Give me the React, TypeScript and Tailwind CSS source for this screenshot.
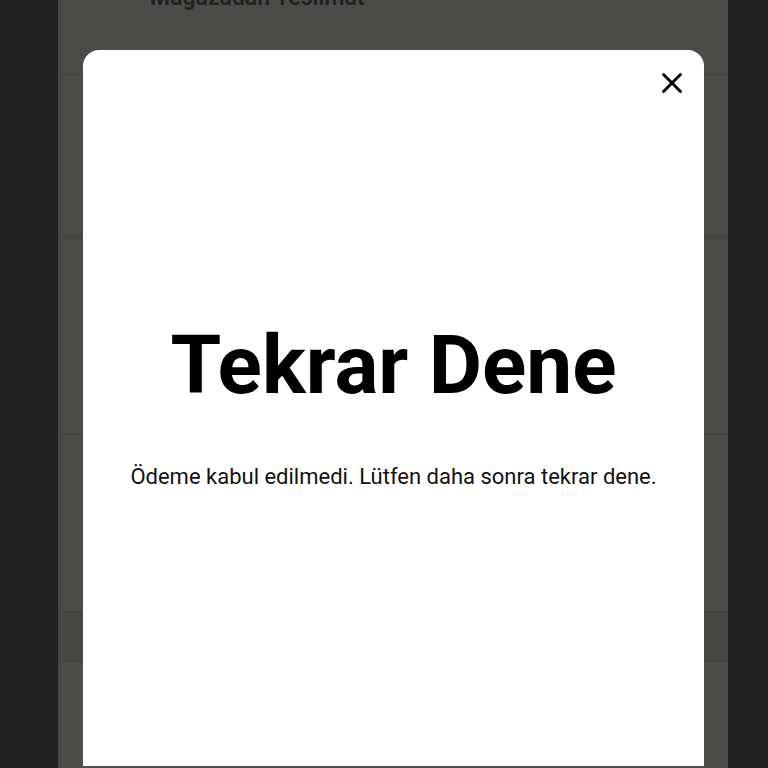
import { X } from "lucide-react";

/**
 * Payment retry modal over a dimmed checkout page
 */

const font = { fontFamily: "Roboto, 'Noto Sans', sans-serif" };

function DimmedPage() {
  return (
    <div className="flex flex-col h-full">
      <div className="h-[75px] border-b border-[#444543] px-[88px]">
        <p className="mt-[-16px] text-[23px] leading-7 font-semibold text-[#222321]">
          Mağazadan Teslimat
        </p>
      </div>
      <div className="h-[165px] border-b-[6px] border-[#464745]" />
      <div className="h-[195px] border-b-2 border-[#454644]" />
      <div className="h-[178px] border-b-2 border-[#454644]" />
      <div className="h-[50px] bg-[#474846]" />
      <div className="flex-1 bg-[#4e4f4d]" />
    </div>
  );
}

export default function App() {
  return (
    <div className="h-screen w-full bg-[#222222] flex overflow-hidden" style={font}>
      <div className="relative ml-[58px] w-[670px] h-full bg-[#4b4c4a] border-l-4 border-[#464745] overflow-hidden">
        <DimmedPage />

        {/* Modal */}
        <div className="absolute left-[21px] top-[50px] w-[621px] bottom-[2px] bg-white rounded-t-2xl flex flex-col">
          <div className="flex justify-end pt-[15px] pr-[14px]">
            <button className="w-9 h-9 flex items-center justify-center text-black">
              <X size={34} strokeWidth={2} />
            </button>
          </div>
          <div className="flex flex-col items-center pt-[223px]">
            <h1 className="text-[82px] leading-none font-bold text-black">
              Tekrar Dene
            </h1>
            <p className="mt-[57px] text-[22px] leading-7 font-normal text-[#111111]">
              Ödeme kabul edilmedi. Lütfen daha sonra tekrar dene.
            </p>
          </div>
        </div>
      </div>
    </div>
  );
}
